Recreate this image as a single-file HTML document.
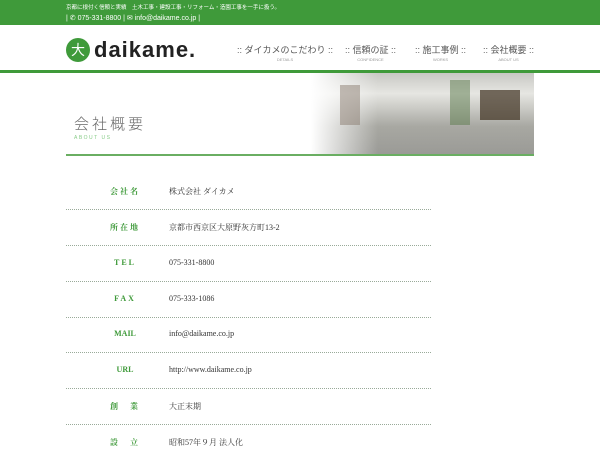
<!DOCTYPE html>
<html><head><meta charset="utf-8"><style>
*{margin:0;padding:0;box-sizing:border-box}
html,body{width:600px;height:450px;overflow:hidden}
body{background:#fff;font-family:"Liberation Sans","Noto Sans CJK JP",sans-serif;position:relative}
.top{position:absolute;left:0;top:0;width:600px;height:25px;background:#3f9a3a;color:#fff;font-size:6px}
.top div{position:absolute;left:66px}
.gl{position:absolute;top:70px;left:0;width:600px;height:3px;background:#3f9a3a}
.logo{position:absolute;left:66px;top:37px;display:flex;align-items:center}
.logo .c{width:24px;height:24px;border-radius:50%;background:#3f9a3a;color:#fff;font-size:14px;text-align:center;line-height:24px}
.logo span{font-size:22px;font-weight:bold;color:#222;margin-left:4px;letter-spacing:1px}
.nav{position:absolute;top:43px;font-size:9px;color:#555;text-align:center;white-space:nowrap}
.nav small{display:block;font-size:4px;color:#999;margin-top:1px}
.ban{position:absolute;left:66px;top:73px;width:468px;height:82px;background:#fff}
.img{position:absolute;left:245px;top:0;width:223px;height:82px;background:linear-gradient(90deg,rgba(255,255,255,1) 0%,rgba(255,255,255,0) 30%),linear-gradient(180deg,#c8c8c4 0%,#e6e6e2 25%,#a8a8a2 65%,#9a9a96 100%)}
.d1{position:absolute;left:340px;top:85px;width:20px;height:40px;background:#8a7c70;opacity:.5}
.d2{position:absolute;left:480px;top:90px;width:40px;height:30px;background:#3e3020;opacity:.7}
.d3{position:absolute;left:450px;top:80px;width:20px;height:45px;background:#5a7a4a;opacity:.5}
.title{position:absolute;left:74px;top:115px;font-size:15px;color:#666;letter-spacing:3px;font-family:"Noto Sans CJK JP",sans-serif;font-weight:300;line-height:18px}
.sub{position:absolute;left:74px;top:135px;font-size:5px;color:#8c8;letter-spacing:1.5px}
.bl{position:absolute;left:66px;top:154px;width:468px;height:2px;background:#6aae62}
.row{position:absolute;left:66px;width:365px;height:36px;border-bottom:1px dotted #9a9;font-family:"Liberation Serif","Noto Serif CJK SC",serif;font-size:8px}
.row b{position:absolute;left:0;width:118px;text-align:center;top:12px;color:#3f9a3a;font-weight:bold;letter-spacing:2px}
.row i{position:absolute;left:103px;top:12px;font-style:normal;color:#333}
</style></head><body>
<div class="top"><div style="top:3px;font-size:5.5px">京都に根付く信頼と実績　土木工事・建設工事・リフォーム・造園工事を一手に扱う。</div><div style="top:14px;font-size:7px">| ✆ 075-331-8800 | ✉ info@daikame.co.jp |</div></div>
<div class="logo"><div class="c">大</div><span>daikame.</span></div>
<div class="nav" style="left:237px">:: ダイカメのこだわり ::<small>DETAILS</small></div>
<div class="nav" style="left:345px">:: 信頼の証 ::<small>CONFIDENCE</small></div>
<div class="nav" style="left:415px">:: 施工事例 ::<small>WORKS</small></div>
<div class="nav" style="left:483px">:: 会社概要 ::<small>ABOUT US</small></div>
<div class="gl"></div>
<div class="ban"><div class="img"></div></div>
<div class="d1"></div><div class="d3"></div><div class="d2"></div>
<div class="title">会社概要</div><div class="sub">ABOUT US</div>
<div class="bl"></div>
<div class="row" style="top:174px"><b>会社名</b><i>株式会社 ダイカメ</i></div>
<div class="row" style="top:210px"><b>所在地</b><i>京都市西京区大原野灰方町13-2</i></div>
<div class="row" style="top:246px"><b>TEL</b><i>075-331-8800</i></div>
<div class="row" style="top:282px"><b>FAX</b><i>075-333-1086</i></div>
<div class="row" style="top:317px"><b style="letter-spacing:0">MAIL</b><i>info@daikame.co.jp</i></div>
<div class="row" style="top:353px"><b style="letter-spacing:0">URL</b><i>http://www.daikame.co.jp</i></div>
<div class="row" style="top:389px"><b>創　業</b><i>大正末期</i></div>
<div class="row" style="top:425px"><b>設　立</b><i>昭和57年９月 法人化</i></div>
</body></html>
